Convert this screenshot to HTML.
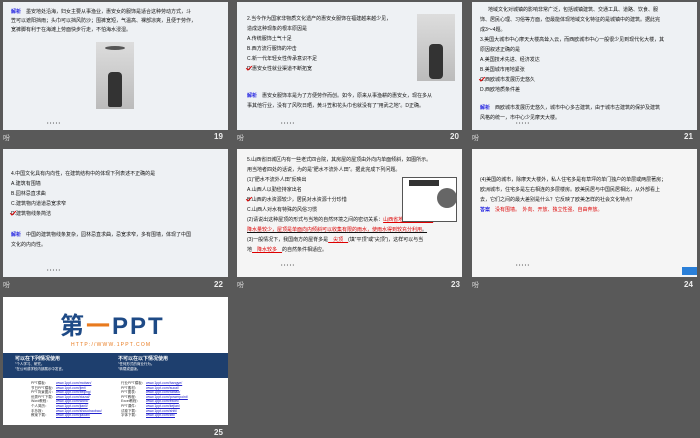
<!DOCTYPE html>
<html><head><meta charset="utf-8"><style>
*{margin:0;padding:0;box-sizing:border-box}
body{width:700px;height:438px;background:#595959;position:relative;overflow:hidden;font-family:"Liberation Sans","Noto Sans CJK SC",sans-serif}
.s{position:absolute;width:225px;height:128px;background:#eef1f4;overflow:hidden}
.w{background:#f5f5f5}
.t{position:absolute;font-size:5px;line-height:10px;color:#111;white-space:nowrap}
.b{color:#1a1ae0;font-weight:bold}
.r{color:#d00}
.lab{position:absolute;font-size:7px;color:#ddd}
.num{position:absolute;font-size:8px;font-weight:bold;color:#eee}
.dots{position:absolute;font-size:4px;color:#333;letter-spacing:1.5px}
.ck{position:absolute;width:6px;height:3px;border-left:1.3px solid #d00;border-bottom:1.3px solid #d00;transform:rotate(-45deg)}
.img{position:absolute;background:linear-gradient(#ddd,#bbb)}
</style></head><body>

<!-- 19 -->
<div class="s" style="left:3px;top:2px">
<div class="t" style="left:8px;top:5px"><span class="b">解析</span>　墨安地处沿海，妇女主要从事渔业，惠安女的服饰是适合这种劳动方式，斗</div>
<div class="t" style="left:8px;top:14px">笠可以遮阳挡雨；头巾可以挡风防沙；围裤宽短，气温高、裸部凉爽，且便于劳作，</div>
<div class="t" style="left:8px;top:23px">宽裤脚有利于在海滩上劳面快步行走，不怕海水浸湿。</div>
<div class="img" style="left:93px;top:40px;width:38px;height:67px"><div style="position:absolute;left:12px;top:30px;width:14px;height:35px;background:#333;border-radius:4px 4px 2px 2px"></div><div style="position:absolute;left:9px;top:4px;width:20px;height:4px;background:#555;border-radius:50%"></div></div>
<div class="dots" style="left:44px;top:118px">•••••</div>
</div>
<div class="lab" style="left:3px;top:133px">吩</div><div class="num" style="left:214px;top:132px">19</div>

<!-- 20 -->
<div class="s" style="left:237px;top:2px">
<div class="t" style="left:10px;top:12px">2.当今作为国家非物质文化遗产的惠安女服饰在福建越来越少见，</div>
<div class="t" style="left:10px;top:22px">造成这种现象的根本原因是</div>
<div class="t" style="left:10px;top:32px">A.传统服饰土气十足</div>
<div class="t" style="left:10px;top:42px">B.西方流行服饰的冲击</div>
<div class="t" style="left:10px;top:52px">C.新一代年轻女性传承意识不足</div>
<div class="t" style="left:10px;top:62px">D.惠安女性就业渠道不断拓宽</div>
<div class="ck" style="left:9px;top:64px"></div>
<div class="img" style="left:180px;top:12px;width:38px;height:67px"><div style="position:absolute;left:12px;top:30px;width:14px;height:35px;background:#333;border-radius:4px"></div></div>
<div class="t" style="left:10px;top:89px"><span class="b">解析</span>　惠安女服饰本是为了方便劳作而创。如今，原来从事渔耕的惠安女，现在多从</div>
<div class="t" style="left:10px;top:99px">事其他行业，没有了风吹日晒，黄斗笠和花头巾也就没有了“用武之地”。D正确。</div>
<div class="dots" style="left:44px;top:118px">•••••</div>
</div>
<div class="lab" style="left:237px;top:133px">吩</div><div class="num" style="left:450px;top:132px">20</div>

<!-- 21 -->
<div class="s" style="left:472px;top:2px">
<div class="t" style="left:16px;top:3px">地域文化对城镇的影响非常广泛，包括城镇建筑、交通工具、道路、饮食、服</div>
<div class="t" style="left:8px;top:13px">饰、居民心理、习俗等方面，但最能体现地域文化特征的是城镇中的建筑。据此完</div>
<div class="t" style="left:8px;top:23px">成3～4题。</div>
<div class="t" style="left:8px;top:33px">3.美国大城市中心摩天大楼高耸入云，而西欧城市中心一般很少见到现代化大楼，其</div>
<div class="t" style="left:8px;top:43px">原因叙述正确的是</div>
<div class="t" style="left:8px;top:53px">A.美国技术先进、经济发达</div>
<div class="t" style="left:8px;top:63px">B.美国城市用地紧张</div>
<div class="t" style="left:8px;top:73px">C.西欧城市发展历史悠久</div>
<div class="ck" style="left:7px;top:75px"></div>
<div class="t" style="left:8px;top:83px">D.西欧地质条件差</div>
<div class="t" style="left:8px;top:101px"><span class="b">解析</span>　西欧城市发展历史悠久，城市中心多古建筑，由于城市古建筑的保护及建筑</div>
<div class="t" style="left:8px;top:111px">风格的统一，市中心少见摩天大楼。</div>
<div class="dots" style="left:44px;top:118px">•••••</div>
</div>
<div class="lab" style="left:472px;top:133px">吩</div><div class="num" style="left:684px;top:132px">21</div>

<!-- 22 -->
<div class="s" style="left:3px;top:149px">
<div class="t" style="left:8px;top:20px">4.中国文化具有内向性，在建筑结构中的体现下列表述不正确的是</div>
<div class="t" style="left:8px;top:30px">A.建筑有围墙</div>
<div class="t" style="left:8px;top:40px">B.园林忌直求曲</div>
<div class="t" style="left:8px;top:50px">C.建筑物内道道忌宽求窄</div>
<div class="t" style="left:8px;top:60px">D.建筑物线条简洁</div>
<div class="ck" style="left:7px;top:62px"></div>
<div class="t" style="left:8px;top:81px"><span class="b">解析</span>　中国的建筑物线条复杂，园林忌直求曲，忌宽求窄，多有围墙，体现了中国</div>
<div class="t" style="left:8px;top:91px">文化的内向性。</div>
<div class="dots" style="left:44px;top:118px">•••••</div>
</div>
<div class="lab" style="left:3px;top:280px">吩</div><div class="num" style="left:214px;top:280px">22</div>

<!-- 23 -->
<div class="s w" style="left:237px;top:149px">
<div class="t" style="left:10px;top:6px">5.山西省旧城区内有一些老式四合院，其房屋的屋顶由外向内单面倾斜，如图所示。</div>
<div class="t" style="left:10px;top:16px">用当地者四处的话说，为的是“肥水不流外人田”。据此完成下列问题。</div>
<div class="t" style="left:10px;top:26px">(1)“肥水不流外人田”反映出</div>
<div class="t" style="left:10px;top:36px">A.山西人以勤俭持家出名</div>
<div class="t" style="left:10px;top:46px">B.山西的水资源较少，居民对水资源十分珍惜</div>
<div class="ck" style="left:9px;top:48px"></div>
<div class="t" style="left:10px;top:56px">C.山西人对水有特殊的风俗习惯</div>
<div class="t" style="left:10px;top:66px">(2)请说出这种屋顶的形式与当地的自然环境之间的密切关系：<span class="r" style="text-decoration:underline">山西省地处我国内陆，</span></div>
<div class="t" style="left:10px;top:76px;text-decoration:underline" ><span class="r">降水量较少，屋顶是单面向内倾斜可以收集有限的雨水，使雨水得到较充分利用</span>。</div>
<div class="t" style="left:10px;top:86px">(3)一般情况下，我国南方的屋脊多是<span class="r" style="text-decoration:underline">　尖顶　</span>(填“平顶”或“尖顶”)，这样可以与当</div>
<div class="t" style="left:10px;top:96px">地<span class="r" style="text-decoration:underline">　降水较多　</span>的自然条件相适应。</div>
<div style="position:absolute;left:165px;top:28px;width:55px;height:45px;border:1px solid #555;background:#fff"><div style="position:absolute;left:6px;top:2px;width:30px;height:6px;background:#333"></div><div style="position:absolute;left:34px;top:10px;width:20px;height:20px;border-radius:50%;background:#666"></div></div>
<div class="dots" style="left:44px;top:113px">•••••</div>
</div>
<div class="lab" style="left:237px;top:280px">吩</div><div class="num" style="left:451px;top:280px">23</div>

<!-- 24 -->
<div class="s w" style="left:472px;top:149px">
<div class="t" style="left:8px;top:26px">(4)美国的城市，除摩天大楼外，私人住宅多是有草坪的单门独户的单层或两层著房；</div>
<div class="t" style="left:8px;top:36px">欧洲城市，住宅多是左右相连的多层楼房。欧美民居与中国民居相比，从外部看上</div>
<div class="t" style="left:8px;top:46px">去，它们之间的最大差别是什么？它反映了欧美怎样的社会文化特点？</div>
<div class="t" style="left:8px;top:56px"><span class="b">答案</span>　<span class="r">没有围墙。　外向、开放、独立性强、自由奔放。</span></div>
<div class="dots" style="left:44px;top:113px">•••••</div>
<div style="position:absolute;left:210px;top:118px;width:15px;height:8px;background:#2a7fd8"></div>
</div>
<div class="lab" style="left:472px;top:280px">吩</div><div class="num" style="left:684px;top:280px">24</div>

<!-- 25 -->
<div class="s" style="left:3px;top:297px;background:#fff">
<div style="position:absolute;left:57px;top:17px;font-size:24px;line-height:26px;font-weight:bold;color:#1e4a86;letter-spacing:2px;white-space:nowrap">第<span style="color:#e87a1e">一</span>PPT</div>
<div style="position:absolute;left:68px;top:45px;font-size:5px;color:#e87a1e;letter-spacing:1.2px;white-space:nowrap">HTTP://WWW.1PPT.COM</div>
<div style="position:absolute;left:0;top:56px;width:225px;height:25px;background:#1e3f6e">
<div class="t" style="left:12px;top:1px;color:#fff;font-size:5px;font-weight:bold">可以在下列情况使用</div>
<div class="t" style="left:12px;top:9px;color:#fff;font-size:3.5px;line-height:5px">°个人学习、研究。<br>°在公司或学校内部展示中发言。</div>
<div class="t" style="left:115px;top:1px;color:#fff;font-size:5px;font-weight:bold">不可以在以下情况使用</div>
<div class="t" style="left:115px;top:9px;color:#fff;font-size:3.5px;line-height:5px">°任何形式的商业行为。<br>°转载或盗版。</div>
</div>
<div class="t" style="left:28px;top:84px;font-size:3.5px;line-height:4.6px;color:#333">PPT模板：<br>节日PPT模板：<br>PPT背景图片：<br>优秀PPT下载：<br>Word教程：<br>个人简历：<br>手抄报：<br>教案下载：</div>
<div class="t" style="left:53px;top:84px;font-size:3.5px;line-height:4.6px;color:#22c;text-decoration:underline">www.1ppt.com/moban/<br>www.1ppt.com/jieri/<br>www.1ppt.com/beijing/<br>www.1ppt.com/xiazai/<br>www.1ppt.com/word/<br>www.1ppt.com/jianli/<br>www.1ppt.com/shouchaobao/<br>www.1ppt.com/jiaoan/</div>
<div class="t" style="left:118px;top:84px;font-size:3.5px;line-height:4.6px;color:#333">行业PPT模板：<br>PPT素材：<br>PPT图表：<br>PPT教程：<br>Excel教程：<br>PPT课件：<br>试卷下载：<br>字体下载：</div>
<div class="t" style="left:143px;top:84px;font-size:3.5px;line-height:4.6px;color:#22c;text-decoration:underline">www.1ppt.com/hangye/<br>www.1ppt.com/sucai/<br>www.1ppt.com/tubiao/<br>www.1ppt.com/powerpoint/<br>www.1ppt.com/excel/<br>www.1ppt.com/kejian/<br>www.1ppt.com/shiti/<br>www.1ppt.com/ziti/</div>
</div>
<div class="num" style="left:214px;top:428px">25</div>
</body></html>
